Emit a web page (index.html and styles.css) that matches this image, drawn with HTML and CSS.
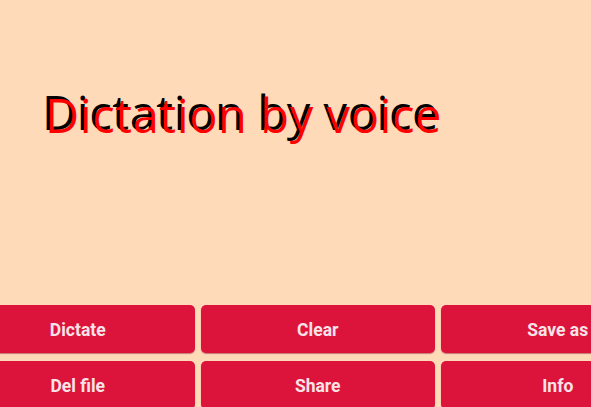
FILE: index.html
```html
<!DOCTYPE html>
<html>
<head>
<meta charset="utf-8">
<link rel="stylesheet" href="styles.css">
</head>
<body>
<div class="screen">
  <div class="hero">
    <h1 class="title">Dictation by voice</h1>
  </div>
  <div class="buttons">
    <div class="btn">Dictate</div>
    <div class="btn">Clear</div>
    <div class="btn">Save as</div>
    <div class="btn">Del file</div>
    <div class="btn">Share</div>
    <div class="btn">Info</div>
  </div>
</div>
</body>
</html>
```
FILE: styles.css
```css
html, body {
  margin: 0;
  padding: 0;
  background: #ffdab9;
  overflow: hidden;
}
.screen {
  width: 591px;
  height: 407px;
  display: flex;
  flex-direction: column;
  overflow: hidden;
}
.hero {
  height: 305px;
  flex-shrink: 0;
  padding-left: 45px;
  box-sizing: border-box;
}
.title {
  margin: 0;
  padding-top: 89px;
  font-family: "Open Sans", sans-serif;
  font-weight: 500;
  font-size: 47px;
  line-height: 52px;
  letter-spacing: 0.6px;
  color: #ff0000;
  text-shadow: -3px -3px 0 #000;
  white-space: nowrap;
}
.buttons {
  flex-shrink: 0;
  display: grid;
  grid-template-columns: repeat(3, 234.5px);
  grid-auto-rows: 48px;
  column-gap: 5.5px;
  row-gap: 8px;
  margin-left: -39.5px;
}
.btn {
  background: #dc143c;
  border-radius: 5px;
  box-shadow: 0 1px 1px rgba(120, 0, 20, 0.45);
  display: flex;
  align-items: center;
  justify-content: center;
  padding-top: 1px;
  box-sizing: border-box;
  font-family: "Roboto", sans-serif;
  font-weight: 700;
  font-size: 17.5px;
  color: #f8e3e7;
}
```
